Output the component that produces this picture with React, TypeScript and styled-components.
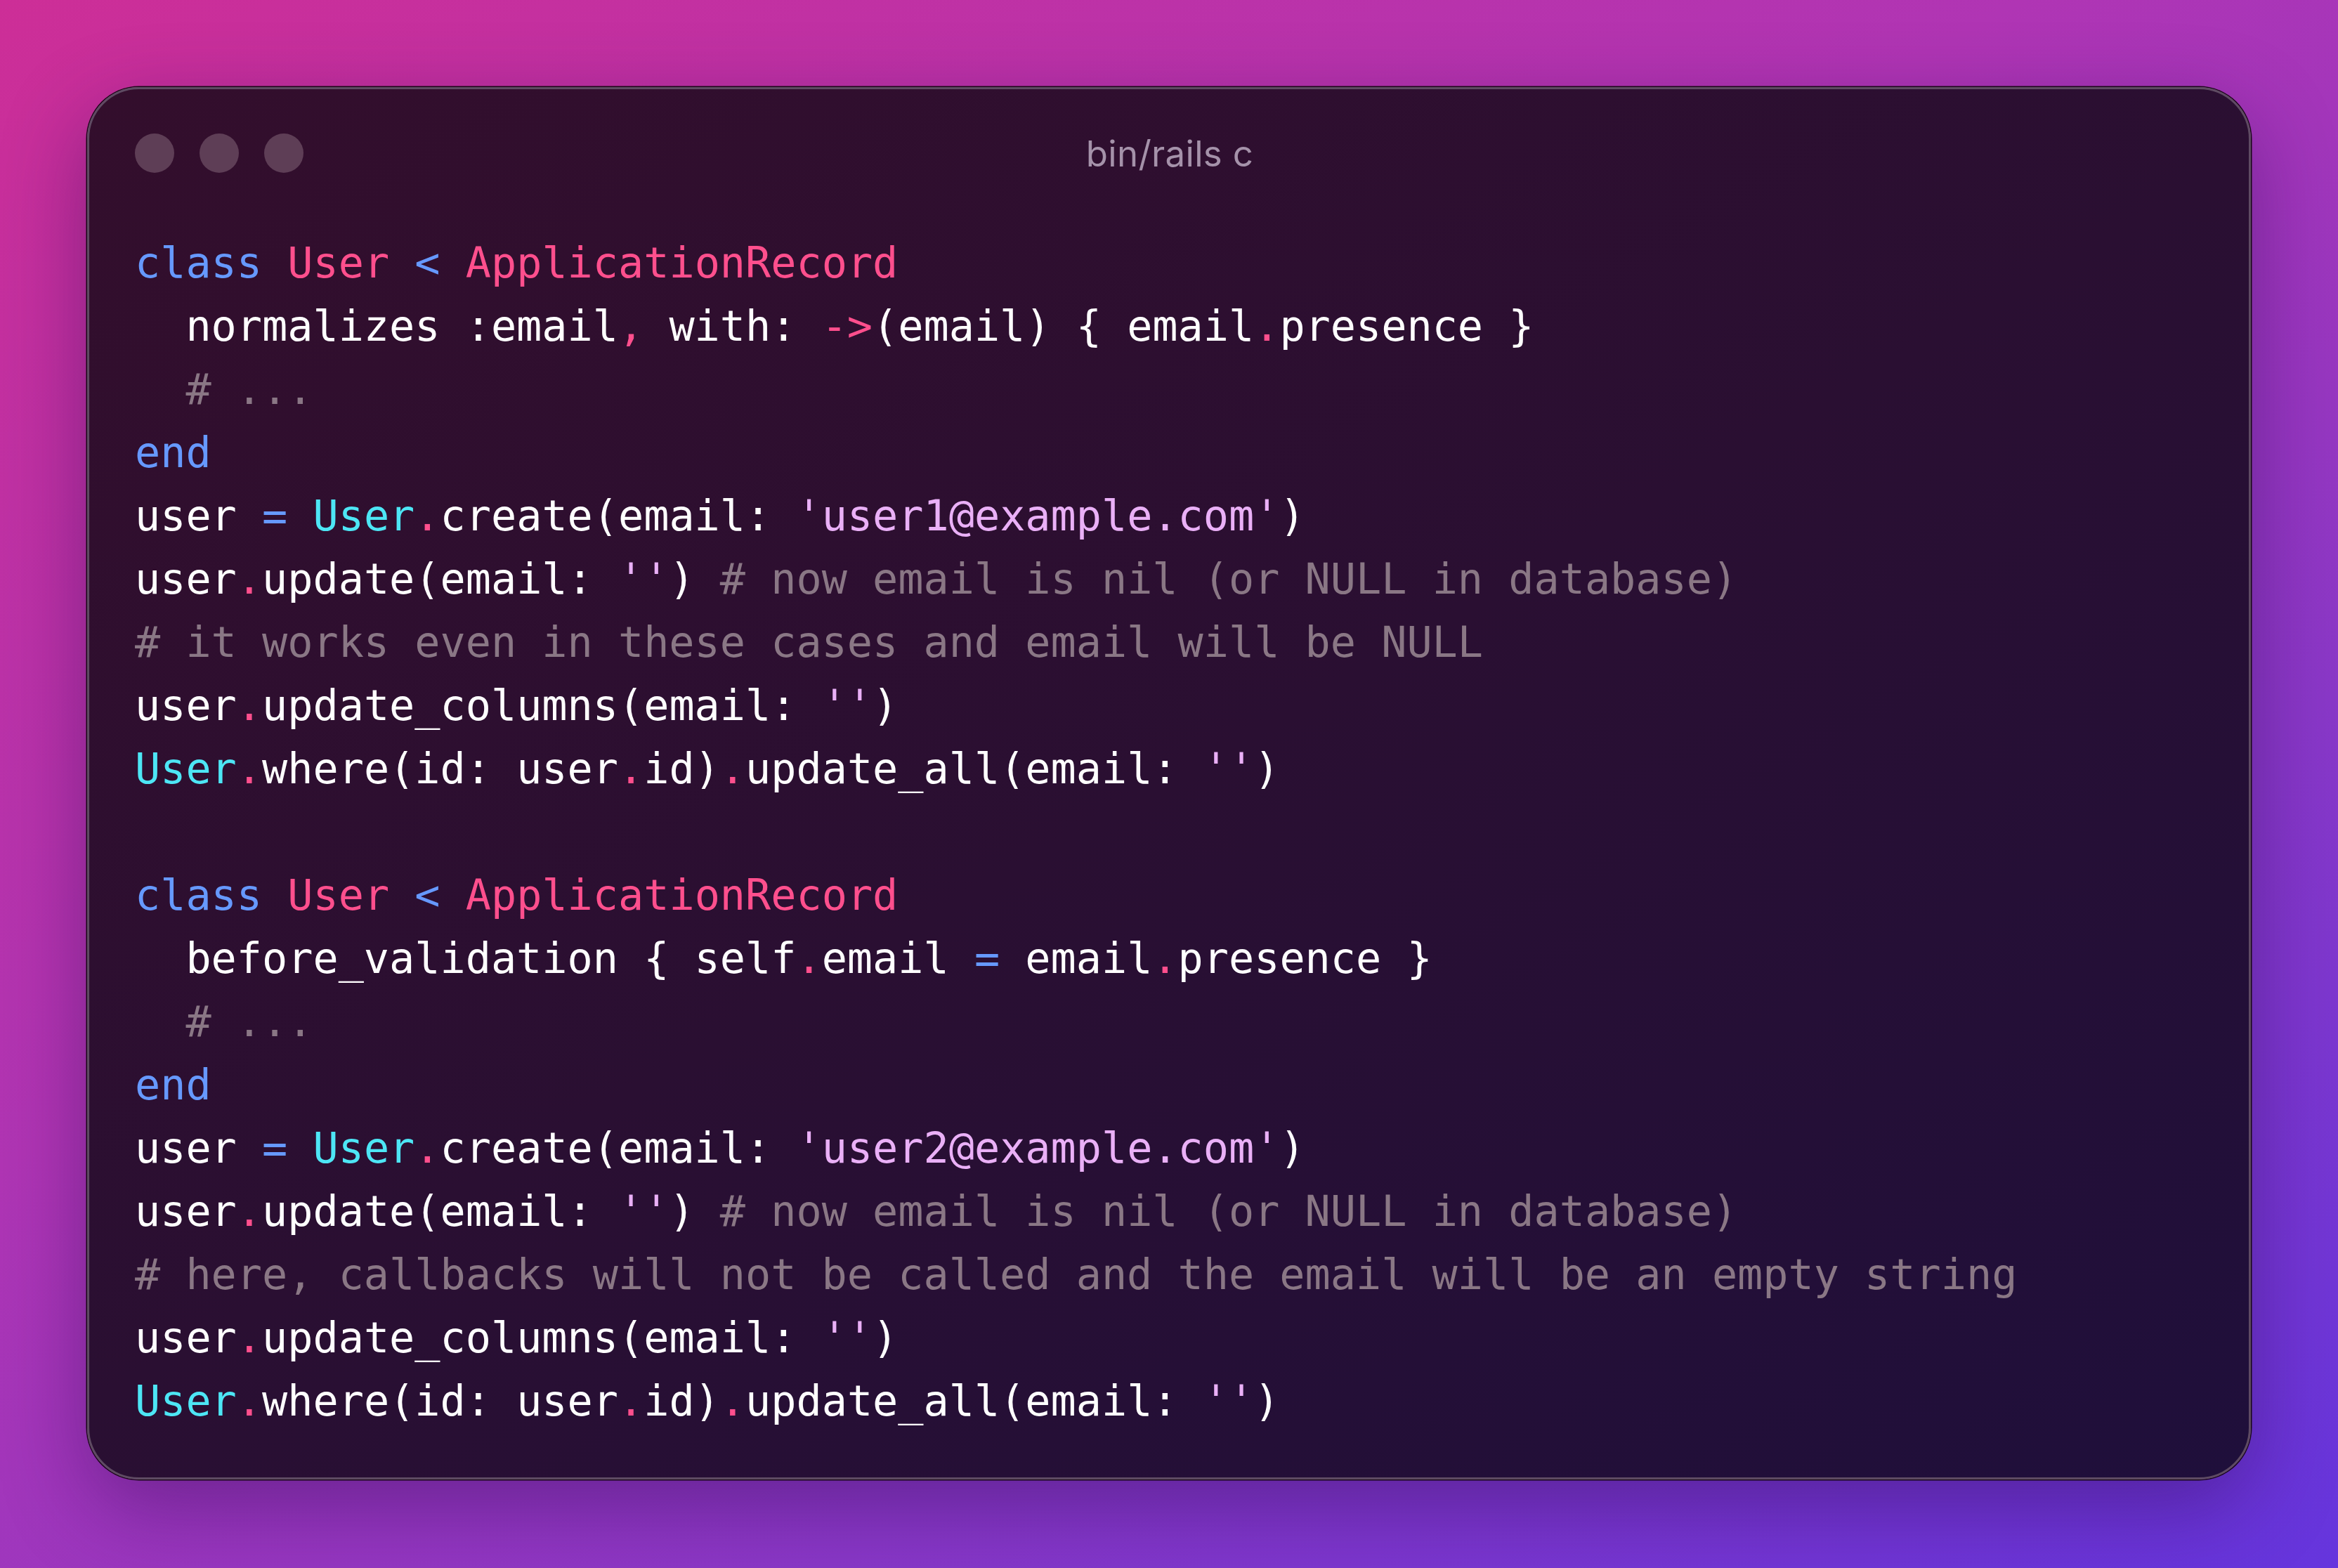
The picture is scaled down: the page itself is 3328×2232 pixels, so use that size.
import React from "react";
import styled, { createGlobalStyle } from "styled-components";

const Global = createGlobalStyle`
  html, body { margin: 0; padding: 0; }
  body { width: 3328px; height: 2232px; overflow: hidden; }
`;

type Kind = "plain" | "kw" | "cls" | "p" | "const" | "str" | "cm";

const colors: Record<Kind, string> = {
  plain: "#ffffff",
  kw: "#6699ff",
  cls: "#ff4f8d",
  p: "#ff4f8d",
  const: "#4de6f5",
  str: "#eab0f7",
  cm: "#8a7785",
};

const Page = styled.div`
  box-sizing: border-box;
  width: 3328px;
  height: 2232px;
  padding: 124px 124px 126px;
  display: flex;
  background: linear-gradient(150deg, #cd2e97 0%, #b035b4 40%, #8a38c8 70%, #6535dd 100%);
`;

const Window = styled.div`
  box-sizing: border-box;
  flex: 1;
  display: flex;
  flex-direction: column;
  border-radius: 74px;
  border: 3px solid #5e4b62;
  box-shadow: 0 0 0 1.5px #1a0818, 0 40px 120px rgba(50, 10, 90, 0.45);
  background: linear-gradient(150deg, #330e2c 0%, #2a0f32 50%, #1f0f3b 100%);
  padding: 61px 63px 0 65px;
`;

const TitleBar = styled.div`
  display: grid;
  grid-template-columns: 1fr auto 1fr;
  align-items: center;
  height: 56px;
`;

const Lights = styled.div`
  display: flex;
  gap: 36px;
`;

const Light = styled.span`
  width: 56px;
  height: 56px;
  border-radius: 50%;
  background: #5e3e56;
`;

const Title = styled.div`
  font-family: Inter, "Liberation Sans", sans-serif;
  font-size: 51px;
  line-height: 56px;
  padding-top: 3px;
  color: #a592aa;
  letter-spacing: 0.3px;
`;

const Code = styled.pre`
  margin: 85px 0 0 0;
  font-family: "DejaVu Sans Mono", monospace;
  font-size: 60.15px;
  line-height: 90px;
  color: #ffffff;
`;

const Line = styled.div`
  height: 90px;
  white-space: pre;
`;

const Tok = styled.span<{ $k: Kind }>`
  color: ${(p) => colors[p.$k]};
`;

type T = [Kind, string];
const t = (k: Kind, s: string): T => [k, s];

const classLine: T[] = [
  t("kw", "class"), t("plain", " "), t("cls", "User"), t("plain", " "),
  t("kw", "<"), t("plain", " "), t("cls", "ApplicationRecord"),
];
const endLine: T[] = [t("kw", "end")];
const dotsLine: T[] = [t("cm", "  # ...")];
const createLine = (n: string): T[] => [
  t("plain", "user "), t("kw", "="), t("plain", " "), t("const", "User"), t("p", "."),
  t("plain", "create(email: "), t("str", `'user${n}@example.com'`), t("plain", ")"),
];
const updateLine: T[] = [
  t("plain", "user"), t("p", "."), t("plain", "update(email: "), t("str", "''"),
  t("plain", ") "), t("cm", "# now email is nil (or NULL in database)"),
];
const columnsLine: T[] = [
  t("plain", "user"), t("p", "."), t("plain", "update_columns(email: "), t("str", "''"), t("plain", ")"),
];
const whereLine: T[] = [
  t("const", "User"), t("p", "."), t("plain", "where(id: user"), t("p", "."), t("plain", "id)"),
  t("p", "."), t("plain", "update_all(email: "), t("str", "''"), t("plain", ")"),
];

const lines: T[][] = [
  classLine,
  [
    t("plain", "  normalizes :email"), t("p", ","), t("plain", " with: "), t("p", "->"),
    t("plain", "(email) { email"), t("p", "."), t("plain", "presence }"),
  ],
  dotsLine,
  endLine,
  createLine("1"),
  updateLine,
  [t("cm", "# it works even in these cases and email will be NULL")],
  columnsLine,
  whereLine,
  [],
  classLine,
  [
    t("plain", "  before_validation { self"), t("p", "."), t("plain", "email "), t("kw", "="),
    t("plain", " email"), t("p", "."), t("plain", "presence }"),
  ],
  dotsLine,
  endLine,
  createLine("2"),
  updateLine,
  [t("cm", "# here, callbacks will not be called and the email will be an empty string")],
  columnsLine,
  whereLine,
];

export default function App() {
  return (
    <>
      <Global />
      <Page>
        <Window>
          <TitleBar>
            <Lights>
              <Light />
              <Light />
              <Light />
            </Lights>
            <Title>bin/rails c</Title>
            <span />
          </TitleBar>
          <Code>
            {lines.map((l, i) => (
              <Line key={i}>
                {l.map(([k, s], j) => (
                  <Tok key={j} $k={k}>{s}</Tok>
                ))}
              </Line>
            ))}
          </Code>
        </Window>
      </Page>
    </>
  );
}
